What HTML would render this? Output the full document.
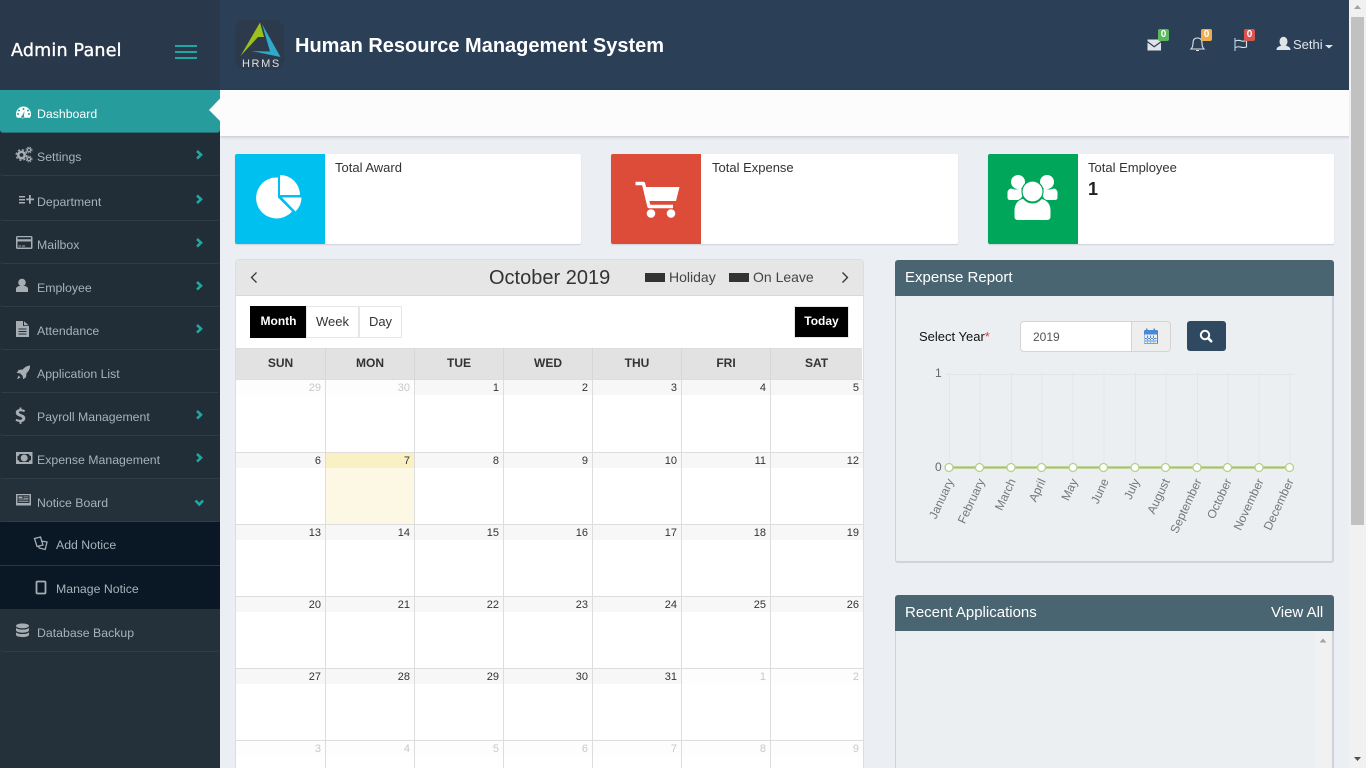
<!DOCTYPE html>
<html><head><meta charset="utf-8"><title>HRMS</title>
<style>
*{box-sizing:border-box}
html,body{margin:0;padding:0;width:1366px;height:768px;overflow:hidden;background:#ebeef3;font-family:"Liberation Sans",sans-serif;color:#333}
#wrap{position:absolute;left:0;top:0;width:1366px;height:768px;overflow:hidden;background:#ebeef3}
.a{position:absolute}
svg{position:absolute;overflow:visible}
#side{position:absolute;left:0;top:0;width:220px;height:768px;background:#212d37}
.it{position:absolute;left:0;width:220px;border-bottom:1px solid #303c47;border-radius:0 0 3px 3px}
.t{position:absolute;left:37px;font-size:12.3px;line-height:14px;color:#a8b2ba;white-space:nowrap}
.ic{fill:#a6adb3}
.ch{fill:none;stroke:#20a8a0;stroke-width:2.6}
.card{position:absolute;top:154px;height:90px;background:#fff;border-radius:2px;box-shadow:0 1px 1px rgba(0,0,0,.12)}
.card .b{position:absolute;left:0;top:0;width:90px;height:90px;border-radius:2px 0 0 2px}
.card .l{position:absolute;left:100px;top:6px;font-size:13px;line-height:15px;color:#333;white-space:nowrap}
.g{position:absolute;left:236px;top:379px;width:627px;height:389px;overflow:hidden;display:grid;grid-template-columns:90px 89px 89px 89px 89px 89px 92px;grid-template-rows:73px 72px 72px 72px 72px 28px;background:#fff}
.g div{border-top:1px solid #ddd;border-right:1px solid #ddd;position:relative}
.g div:nth-child(7n){border-right:0}
.g span{display:block;height:15px;background:#f7f7f7;text-align:right;padding-right:4px;font-size:11px;line-height:16px;color:#333}
.g .o span{background:#fdfdfd;color:#c8c8c8}
.g .td{background:#fcf8e3}
.g .td span{background:#f9f1c4}
.hd{position:absolute;top:348px;height:32px;background:#e2e2e2;border-right:1px solid #d6d6d6;border-bottom:1px solid #d6d6d6;border-top:1px solid #ddd;text-align:center;font-weight:bold;font-size:12px;line-height:29px;color:#333}
.btn{position:absolute;top:306px;height:32px;border:1px solid #e6e6e6;background:#fff;font-size:13px;line-height:29px;text-align:center;color:#333}
.ph{position:absolute;left:895px;width:439px;height:36px;background:#4a6572;border-radius:3px 3px 0 0;color:#fff;font-size:15px;line-height:35px;padding-left:10px}
.pb{position:absolute;left:895px;width:439px;background:#eceff1;border-left:1px solid #cfd4d8;border-right:2px solid #cfd4d8}
</style></head><body>
<div id="wrap">

<!-- top bar -->
<div class="a" style="left:220px;top:0;width:1130px;height:90px;background:#2b3f57"></div>
<div class="a" style="left:220px;top:90px;width:1130px;height:46px;background:#fcfcfc;box-shadow:0 1px 3px rgba(0,0,0,.18)"></div>

<!-- logo -->
<div class="a" style="left:235px;top:20px;width:49px;height:50px;background:#2d3a4c;border-radius:10px"></div>
<svg style="left:0;top:0" width="1366" height="90">
<path d="M260 22.500L264 37 258 37 240.500 56Z" fill="#9cc11c"/>
<path d="M262 24L280.500 57 251.500 51 270 51.500Z" fill="#2fa9c9"/>
</svg>
<div class="a" style="left:242px;top:58px;font-size:11px;line-height:12px;letter-spacing:1.6px;color:#dde1e5;white-space:nowrap">HRMS</div>
<div class="a" style="left:295px;top:33px;font-size:20px;line-height:27px;font-weight:bold;color:#fff;white-space:nowrap">Human Resource Management System</div>

<!-- top right icons -->
<svg style="left:0;top:0" width="1366" height="90">
<path d="M1147.500 39.500h13.500v1.500l-6.800 5-6.700-5z" fill="#dfe4e9"/>
<path d="M1147.500 42.500l6.700 5 6.800-5v8h-13.500z" fill="#dfe4e9"/>
<path d="M1197.500 38c3 0 4.500 2 4.500 5 0 3 1 5 2 6h-13c1-1 2-3 2-6 0-3 1.500-5 4.500-5zM1196 50.500h3" fill="none" stroke="#dfe4e9" stroke-width="1.100"/>
<path d="M1235 38v13" stroke="#9cc3dd" stroke-width="1.300" fill="none"/>
<path d="M1235.500 41c3-1.500 4-.5 6 0s3 0 5-.5v6.500c-3 1-4 .500-6 0s-3-.5-5 .5" fill="none" stroke="#dfe4e9" stroke-width="1.100"/>
<ellipse cx="1283.500" cy="41.500" rx="4" ry="4.700" fill="#dfe4e9"/>
<path d="M1276.500 50c0-3 2.500-3.500 4.500-4.500h5c2 1 4.500 1.500 4.500 4.500z" fill="#dfe4e9"/>
<path d="M1325 45h8l-4 3.500z" fill="#dfe4e9"/>
</svg>
<div class="a" style="left:1158px;top:29px;width:11px;height:12px;background:#5cb85c;border-radius:2px;color:#fff;font-size:10px;font-weight:bold;line-height:12px;text-align:center">0</div>
<div class="a" style="left:1201px;top:29px;width:11px;height:12px;background:#f0ad4e;border-radius:2px;color:#fff;font-size:10px;font-weight:bold;line-height:12px;text-align:center">0</div>
<div class="a" style="left:1244px;top:29px;width:11px;height:12px;background:#d9534f;border-radius:2px;color:#fff;font-size:10px;font-weight:bold;line-height:12px;text-align:center">0</div>
<div class="a" style="left:1293px;top:37px;font-size:13px;line-height:15px;color:#dfe4e9">Sethi</div>

<!-- sidebar -->
<div id="side">
<div class="a" style="left:0;top:0;width:220px;height:90px;background:#29384a"></div>
<div class="a" style="left:11px;top:38px;font-family:'DejaVu Sans',sans-serif;font-size:17.5px;line-height:26px;color:#fff;white-space:nowrap;letter-spacing:.2px;-webkit-text-stroke:.35px #fff">Admin Panel</div>
<div class="a" style="left:175px;top:45px;width:22px;height:2px;background:#1fa8a3"></div>
<div class="a" style="left:175px;top:51px;width:22px;height:2px;background:#1fa8a3"></div>
<div class="a" style="left:175px;top:57px;width:22px;height:2px;background:#1fa8a3"></div>

<div class="a" style="left:0;top:90px;width:220px;height:43px;background:#269c9c;border-bottom:1px solid #2b6f75;border-radius:0 0 3px 3px"></div>
<div class="a" style="left:0;top:478px;width:220px;height:290px;background:#24303a"></div>
<div class="it" style="top:133px;height:43px"></div>
<div class="it" style="top:176px;height:45px"></div>
<div class="it" style="top:221px;height:43px"></div>
<div class="it" style="top:264px;height:43px"></div>
<div class="it" style="top:307px;height:43px"></div>
<div class="it" style="top:350px;height:43px"></div>
<div class="it" style="top:393px;height:43px"></div>
<div class="it" style="top:436px;height:43px"></div>
<div class="it" style="top:479px;height:43px"></div>
<div class="a" style="left:0;top:522px;width:220px;height:87px;background:#0a1826"></div>
<div class="a" style="left:0;top:565px;width:220px;height:1px;background:#2a3640"></div>
<div class="it" style="top:609px;height:43px"></div>

<div class="t" style="top:107px;color:#fff">Dashboard</div>
<div class="t" style="top:150px">Settings</div>
<div class="t" style="top:195px">Department</div>
<div class="t" style="top:238px">Mailbox</div>
<div class="t" style="top:281px">Employee</div>
<div class="t" style="top:324px">Attendance</div>
<div class="t" style="top:367px">Application List</div>
<div class="t" style="top:410px">Payroll Management</div>
<div class="t" style="top:453px">Expense Management</div>
<div class="t" style="top:496px">Notice Board</div>
<div class="t" style="top:538px;left:56px">Add Notice</div>
<div class="t" style="top:582px;left:56px">Manage Notice</div>
<div class="t" style="top:626px">Database Backup</div>
</div>

<svg style="left:0;top:0" width="220" height="768">
<path d="M220 98.500L209 110 220 121z" fill="#fcfcfc"/>
<!-- gauge -->
<path fill-rule="evenodd" fill="#fff" d="M23.500 106.500a7.500 7.500 0 0 1 7.500 7.500c0 1.500-.4 2.800-1 3.700H17c-.6-.9-1-2.200-1-3.700a7.500 7.500 0 0 1 7.500-7.500zM19 109.500a1 1 0 1 0 .01 0zM23.500 108a1 1 0 1 0 .01 0zM28 109.500a1 1 0 1 0 .01 0zM18 113a1 1 0 1 0 .01 0zM29 113a1 1 0 1 0 .01 0zM24.500 111l-2.200 4.500a1.500 1.500 0 1 0 1.600.5z"/>
<!-- cogs -->
<circle cx="21.500" cy="155" r="3.200" fill="none" stroke="#a6adb3" stroke-width="2.600"/>
<circle cx="21.500" cy="155" r="5.300" fill="none" stroke="#a6adb3" stroke-width="1.400" stroke-dasharray="2.200 2"/>
<circle cx="29" cy="150" r="1.700" fill="none" stroke="#a6adb3" stroke-width="1.300"/>
<circle cx="29" cy="150" r="3" fill="none" stroke="#a6adb3" stroke-width=".9" stroke-dasharray="1.300 1.100"/>
<circle cx="29" cy="159" r="1.700" fill="none" stroke="#a6adb3" stroke-width="1.300"/>
<circle cx="29" cy="159" r="3" fill="none" stroke="#a6adb3" stroke-width=".9" stroke-dasharray="1.300 1.100"/>
<!-- list plus -->
<path class="ic" d="M19 196h6v1.500h-6zM19 199h6v1.500h-6zM19 202h6v1.500h-6zM29 195h1.800v3.500h3.200v1.800h-3.200v3.500H29v-3.500h-2.800v-1.800H29z"/>
<!-- card -->
<path class="ic" fill-rule="evenodd" d="M17.500 236h13.500a1.500 1.500 0 0 1 1.500 1.500v10a1.500 1.500 0 0 1-1.500 1.500H17.500a1.500 1.500 0 0 1-1.500-1.500v-10a1.500 1.500 0 0 1 1.500-1.500zM17.500 237.200v2h13.500v-2zM17.500 241.500v6h13.500v-6zM18.500 245.500h2.500v1h-2.500zM22 245.500h3v1h-3z"/>
<!-- user -->
<circle class="ic" cx="22" cy="282.500" r="3.800"/>
<path class="ic" d="M16 292v-3c0-1.800 1.500-2.500 3-3h6c1.500.5 3 1.200 3 3v3z"/>
<!-- file -->
<path class="ic" fill-rule="evenodd" d="M16 321h7v5h6v11H16zM24 321.300l4.700 4h-4.700zM18.500 328.500v1h8v-1zM18.500 331v1h8v-1zM18.500 333.500v1h8v-1z"/>
<!-- rocket -->
<path class="ic" d="M30 365.500c.2 3-1 5.500-3.500 7.800l-.5 4-2.800 1.900-.6-3.300-2.500-2.500-3.400-.5 2-3 4-.4c2-2.500 4.500-3.800 7.300-4zM18.500 375.500l2 2-3.500 1.800z"/>
<!-- dollar -->
<path class="ic" d="M19.500 407.500h2v1.700c1.500.1 2.700.5 3.500 1l-.8 2c-1-.5-2.200-.9-3.400-.9-1.200 0-1.900.4-1.900 1.100 0 .8.800 1.200 2.600 1.800 2.600.9 3.800 2 3.800 4 0 2-1.400 3.400-3.800 3.800v1.900h-2V422c-1.600-.1-3.100-.6-4-1.200l.8-2.100c1 .6 2.400 1.100 3.700 1.100 1.300 0 2.200-.5 2.200-1.300 0-.8-.7-1.300-2.400-1.900-2.500-.8-4-1.900-4-4 0-1.900 1.300-3.200 3.700-3.600z"/>
<!-- money -->
<path class="ic" fill-rule="evenodd" d="M16 452h16.500v12H16zM19.500 454c0 1.200-.9 2-2 2v4c1.100 0 2 .8 2 2h9.500c0-1.200.9-2 2-2v-4c-1.100 0-2-.8-2-2zM24.200 454.500a3.500 3.500 0 1 1 0 7 3.500 3.500 0 0 1 0-7z"/>
<!-- newspaper -->
<path class="ic" fill-rule="evenodd" d="M16 494h15v11.500H16zM17.500 495.300v7.700h12v-7.700zM18.500 496.500h4v2h-4zM23.500 496.500h5v.8h-5zM23.500 498h5v.8h-5zM18.500 499.500h10v.8h-10zM18.500 501h10v.8h-10z"/>
<!-- copy -->
<path fill="none" stroke="#a6adb3" stroke-width="1.300" d="M34.500 538.500l6-1.500 2.500 8-6 1.500zM41 541l6 1-1.800 7.500-6-1.500-.7-2"/>
<!-- square -->
<rect x="36.500" y="581.500" width="9" height="12" rx="1" fill="none" stroke="#a6adb3" stroke-width="1.800"/>
<!-- database -->
<path class="ic" d="M22.500 623.500c3.500 0 6.500 1 6.500 2.400s-3 2.400-6.500 2.400-6.500-1-6.500-2.400 3-2.400 6.500-2.400zM16 627.800c1 1.300 3.500 1.800 6.500 1.800s5.500-.5 6.500-1.800v2.500c0 1.400-3 2.400-6.500 2.400s-6.500-1-6.500-2.400zM16 632.200c1 1.300 3.500 1.800 6.500 1.800s5.500-.5 6.500-1.800v2.500c0 1.400-3 2.400-6.500 2.400s-6.500-1-6.500-2.400z"/>
<!-- chevrons -->
<path class="ch" d="M197 151l4 3.800-4 3.800"/>
<path class="ch" d="M197 195.500l4 3.800-4 3.800"/>
<path class="ch" d="M197 239l4 3.800-4 3.800"/>
<path class="ch" d="M197 282l4 3.800-4 3.800"/>
<path class="ch" d="M197 325l4 3.800-4 3.800"/>
<path class="ch" d="M197 411l4 3.800-4 3.800"/>
<path class="ch" d="M197 454l4 3.800-4 3.800"/>
<path class="ch" d="M195.500 500.500l3.800 4 3.800-4"/>
</svg>

<!-- cards -->
<div class="card" style="left:235px;width:346px"><div class="b" style="background:#00c0ef"></div><div class="l">Total Award</div></div>
<div class="card" style="left:611px;width:347px"><div class="b" style="background:#dd4b39"></div><div class="l" style="left:101px">Total Expense</div></div>
<div class="card" style="left:988px;width:346px"><div class="b" style="background:#00a65a"></div><div class="l">Total Employee</div>
<div class="a" style="left:100px;top:24px;font-size:18px;font-weight:bold;line-height:22px;color:#222">1</div></div>

<svg style="left:0;top:0" width="1366" height="260">
<!-- pie -->
<path fill="#fff" d="M278 177.500V197.500L292 211.500A20.500 20.500 0 1 1 278 177.500Z"/>
<path fill="#fff" d="M280 175A20 20 0 0 1 300 195H280Z"/>
<path fill="#fff" d="M282 197.500H301.500A20 20 0 0 1 295.500 211.500Z"/>
<!-- cart -->
<path fill="none" stroke="#fff" stroke-width="3.400" stroke-linejoin="round" d="M635.500 183.500h8l5.500 23h24"/>
<path fill="#fff" d="M645 187h34.500l-3.500 14h-27z"/>
<circle cx="651" cy="213.500" r="4.300" fill="#fff"/>
<circle cx="671" cy="213.500" r="4.300" fill="#fff"/>
<!-- users -->
<circle cx="1018" cy="182" r="7" fill="#fff"/>
<circle cx="1047" cy="182" r="7" fill="#fff"/>
<path fill="#fff" d="M1011 188.500c2.500 1 5 1.500 9 0 2 0 4 1 5 3l-5 8.500h-10c-1.500 0-2.500-1-2.500-2.500v-5c0-2 1.500-3.500 3.500-4zM1054 188.500c-2.500 1-5 1.500-9 0-2 0-4 1-5 3l5 8.500h10c1.500 0 2.500-1 2.500-2.500v-5c0-2-1.500-3.500-3.500-4z"/>
<circle cx="1032.500" cy="191.500" r="10.500" fill="#fff" stroke="#00a65a" stroke-width="1.200"/>
<path fill="#fff" stroke="#00a65a" stroke-width="1" d="M1023.500 198.500c2.500 3 5 4.500 9 4.500s6.500-1.500 9-4.500c6 1 9.500 6 9.500 12v6c0 2.500-1.500 4-4 4h-29c-2.500 0-4-1.500-4-4v-6c0-6 3.500-11 8.500-12z"/>
</svg>

<!-- calendar -->
<div class="a" style="left:235px;top:259px;width:629px;height:509px;background:#fff;border:1px solid #ddd;border-bottom:0;border-radius:4px 4px 0 0"></div>
<div class="a" style="left:236px;top:260px;width:627px;height:36px;background:#e6e6e6;border-bottom:1px solid #d8d8d8;border-radius:3px 3px 0 0"></div>
<svg style="left:0;top:0" width="1366" height="300">
<path d="M256.500 272.500l-5 5 5 5" fill="none" stroke="#333" stroke-width="1.300"/>
<path d="M842.500 272.500l5 5-5 5" fill="none" stroke="#333" stroke-width="1.300"/>
</svg>
<div class="a" style="left:489px;top:265px;font-size:20px;line-height:26px;color:#333;white-space:nowrap">October 2019</div>
<div class="a" style="left:645px;top:273px;width:20px;height:9px;background:#333"></div>
<div class="a" style="left:669px;top:269px;font-size:14px;line-height:17px;color:#444">Holiday</div>
<div class="a" style="left:729px;top:273px;width:20px;height:9px;background:#333"></div>
<div class="a" style="left:753px;top:269px;font-size:14px;line-height:17px;color:#444">On Leave</div>

<div class="btn" style="left:250px;width:57px;background:#000;border-color:#000;color:#fff;font-size:12px;font-weight:bold">Month</div>
<div class="btn" style="left:306px;width:53px">Week</div>
<div class="btn" style="left:359px;width:43px">Day</div>
<div class="btn" style="left:794px;width:55px;background:#000;color:#fff;font-size:12px;font-weight:bold">Today</div>

<div class="hd" style="left:236px;width:90px">SUN</div>
<div class="hd" style="left:326px;width:89px">MON</div>
<div class="hd" style="left:415px;width:89px">TUE</div>
<div class="hd" style="left:504px;width:89px">WED</div>
<div class="hd" style="left:593px;width:89px">THU</div>
<div class="hd" style="left:682px;width:89px">FRI</div>
<div class="hd" style="left:771px;width:91px;border-right:0">SAT</div>

<div class="g">
<div class="o"><span>29</span></div><div class="o"><span>30</span></div><div><span>1</span></div><div><span>2</span></div><div><span>3</span></div><div><span>4</span></div><div><span>5</span></div>
<div><span>6</span></div><div class="td"><span>7</span></div><div><span>8</span></div><div><span>9</span></div><div><span>10</span></div><div><span>11</span></div><div><span>12</span></div>
<div><span>13</span></div><div><span>14</span></div><div><span>15</span></div><div><span>16</span></div><div><span>17</span></div><div><span>18</span></div><div><span>19</span></div>
<div><span>20</span></div><div><span>21</span></div><div><span>22</span></div><div><span>23</span></div><div><span>24</span></div><div><span>25</span></div><div><span>26</span></div>
<div><span>27</span></div><div><span>28</span></div><div><span>29</span></div><div><span>30</span></div><div><span>31</span></div><div class="o"><span>1</span></div><div class="o"><span>2</span></div>
<div class="o"><span>3</span></div><div class="o"><span>4</span></div><div class="o"><span>5</span></div><div class="o"><span>6</span></div><div class="o"><span>7</span></div><div class="o"><span>8</span></div><div class="o"><span>9</span></div>
</div>

<!-- expense report -->
<div class="pb" style="top:296px;height:267px;border-bottom:2px solid #cfd4d8;border-radius:0 0 3px 3px"></div>
<div class="ph" style="top:260px">Expense Report</div>
<div class="a" style="left:919px;top:329px;font-size:13px;line-height:15px;color:#111;white-space:nowrap">Select Year<span style="color:#e33;font-size:13px">*</span></div>
<div class="a" style="left:1020px;top:321px;width:112px;height:31px;background:#fff;border:1px solid #d4d4d4;border-radius:4px 0 0 4px;font-size:12px;line-height:30px;color:#555;padding-left:12px">2019</div>
<div class="a" style="left:1131px;top:321px;width:40px;height:31px;background:#eee;border:1px solid #d4d4d4;border-radius:0 4px 4px 0"></div>
<div class="a" style="left:1187px;top:321px;width:39px;height:30px;background:#2f4a60;border-radius:3px"></div>

<svg style="left:0;top:0" width="1366" height="768">
<!-- calendar icon -->
<path fill="#4a8ad4" fill-rule="evenodd" d="M1144 330h2v-1.500h1.500v1.500h6v-1.500h1.500v1.500h2c.5 0 1 .5 1 1v12c0 .5-.5 1-1 1h-12c-.5 0-1-.5-1-1v-12c0-.5.5-1 1-1zM1144.500 334.500v8.800h12.500v-8.800zM1147 335.500h1v7h-1zM1150 335.500h1v7h-1zM1153 335.500h1v7h-1zM1145 338h11.500v1H1145zM1145 340.500h11.500v1H1145z"/>
<!-- search -->
<circle cx="1205" cy="335" r="4.200" fill="none" stroke="#fff" stroke-width="2"/>
<path d="M1208.200 338.200l3 3" stroke="#fff" stroke-width="2.600" stroke-linecap="round"/>
<!-- chart -->
<g stroke="#e3e6e8" stroke-width="1" fill="none">
<path d="M945 374.500H1295"/>
<path d="M949.500 372V467M980 372V467M1011.500 372V467M1042 372V467M1073 372V467M1104 372V467M1135.500 372V467M1166 372V467M1197.500 372V467M1228 372V467M1259 372V467M1290 372V467"/>
</g>
<path d="M949 467.500H1289.500" stroke="#a6c46a" stroke-width="2.200"/>
<g fill="#fff" stroke="#b8d08a" stroke-width="1.300">
<circle cx="949" cy="467.500" r="4"/><circle cx="979.500" cy="467.500" r="4"/><circle cx="1011" cy="467.500" r="4"/><circle cx="1041.500" cy="467.500" r="4"/><circle cx="1073" cy="467.500" r="4"/><circle cx="1103.500" cy="467.500" r="4"/><circle cx="1135" cy="467.500" r="4"/><circle cx="1165.500" cy="467.500" r="4"/><circle cx="1197" cy="467.500" r="4"/><circle cx="1227.500" cy="467.500" r="4"/><circle cx="1259" cy="467.500" r="4"/><circle cx="1289.500" cy="467.500" r="4"/>
</g>
<g font-family="Liberation Sans, sans-serif" font-size="12" fill="#666">
<text x="935" y="377">1</text>
<text x="935" y="471">0</text>
</g>
<g font-family="Liberation Sans, sans-serif" font-size="12" fill="#777" text-anchor="end">
<text transform="translate(954,481) rotate(-65)">January</text>
<text transform="translate(985,481) rotate(-65)">February</text>
<text transform="translate(1016,481) rotate(-65)">March</text>
<text transform="translate(1046,481) rotate(-65)">April</text>
<text transform="translate(1078,481) rotate(-65)">May</text>
<text transform="translate(1109,481) rotate(-65)">June</text>
<text transform="translate(1140,481) rotate(-65)">July</text>
<text transform="translate(1170,481) rotate(-65)">August</text>
<text transform="translate(1202,481) rotate(-65)">September</text>
<text transform="translate(1232,481) rotate(-65)">October</text>
<text transform="translate(1264,481) rotate(-65)">November</text>
<text transform="translate(1294,481) rotate(-65)">December</text>
</g>
</svg>

<!-- recent applications -->
<div class="pb" style="top:631px;height:137px"></div>
<div class="ph" style="top:595px">Recent Applications</div>
<div class="a" style="left:1271px;top:595px;font-size:15px;line-height:35px;color:#fff">View All</div>
<div class="a" style="left:1315px;top:631px;width:16px;height:137px;background:#f1f1f1"></div>
<svg style="left:0;top:0" width="1366" height="768"><path d="M1319.500 642.500l3.500-4 3.500 4z" fill="#a3a3a3"/></svg>

<!-- scrollbar -->
<div class="a" style="left:1349px;top:0;width:17px;height:768px;background:#f1f1f1"></div>
<div class="a" style="left:1351px;top:17px;width:13px;height:508px;background:#c1c1c1"></div>
<svg style="left:0;top:0" width="1366" height="768">
<path d="M1354 9l3.500-4 3.500 4z" fill="#a3a3a3"/>
<path d="M1354 757l3.500 4 3.500-4z" fill="#505050"/>
</svg>
</div>
</body></html>
